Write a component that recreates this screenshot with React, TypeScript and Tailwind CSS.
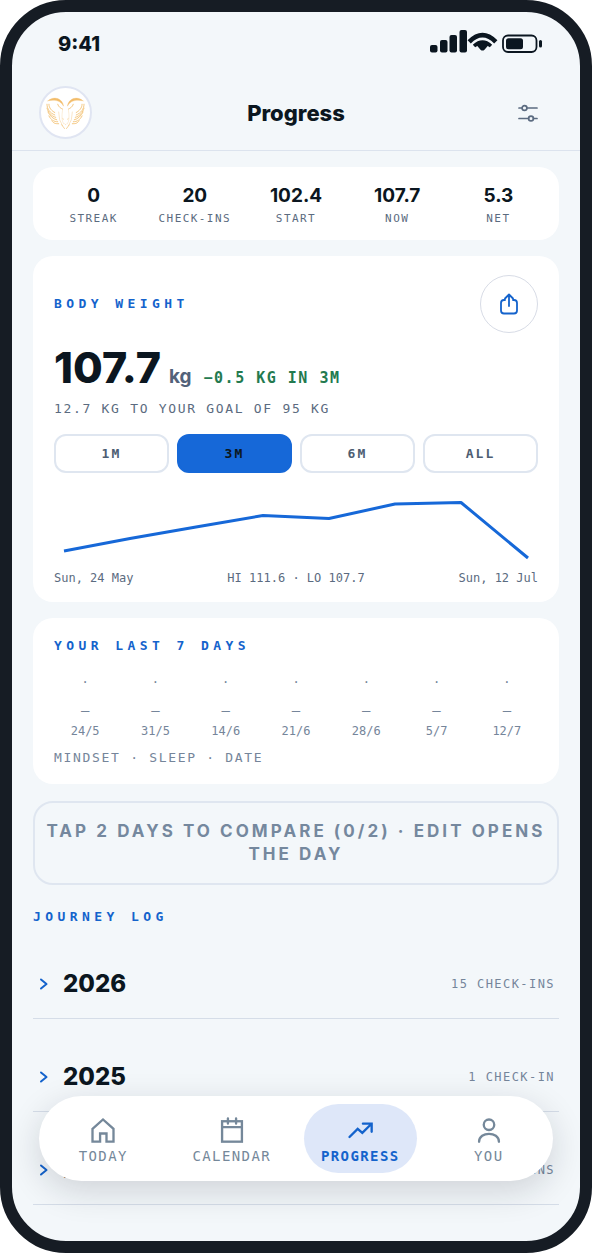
import type { ReactNode } from "react";

const stats = [
  { value: "0", label: "STREAK" },
  { value: "20", label: "CHECK-INS" },
  { value: "102.4", label: "START" },
  { value: "107.7", label: "NOW" },
  { value: "5.3", label: "NET" },
];

const ranges = ["1M", "3M", "6M", "ALL"];
const days = ["24/5", "31/5", "14/6", "21/6", "28/6", "5/7", "12/7"];
const years = [
  { year: "2026", count: "15 CHECK-INS" },
  { year: "2025", count: "1 CHECK-IN" },
  { year: "2024", count: "4 CHECK-INS" },
];

function RamLogo() {
  const wing = (
    <g strokeLinecap="round">
      <path d="M1 8 C1 13 4 17 9 19" />
      <path d="M1 12 C2 16 5 20 10 21.500" />
      <path d="M2 16 C4 20 7 23 11 24" />
      <path d="M3 20 C5 24 8 26 12 26" />
      <path d="M6 25 C8 28 10 28 13 28" />
      <path d="M3 8 C3 12 6 15 9 16.500" />
      <path d="M2 4.500 C8 -1 17 2 18 10 C15 4 9 3 2 4.500Z" fill="#f3bd6a" strokeWidth=".4" />
      <path d="M12 8 C13 11 15 12 17 13" />
      <path d="M13 16 L14 24 L17 30" opacity=".45" />
      <path d="M17 14 C16 20 16 25 18 28" opacity=".3" />
      <path d="M16 29 L19 33" opacity=".8" />
    </g>
  );
  return (
    <svg viewBox="0 0 40 34" className="mt-px h-[34px] w-[39px]" fill="none" stroke="#f4c680" strokeWidth="1" aria-hidden="true">
      {wing}
      <g transform="translate(40 0) scale(-1 1)">{wing}</g>
      <path d="M17 22 L18 24 M23 22 L22 24 M19 28 L20 29 L21 28" opacity=".5" />
    </svg>
  );
}

function StatusIcons() {
  return (
    <div className="flex items-center pb-1 text-[#0b1620]">
      <svg width="37" height="24" viewBox="0 0 37 24" fill="currentColor" aria-hidden="true">
        <rect x="0" y="15" width="7.5" height="7.5" rx="2" />
        <rect x="10" y="10" width="7.5" height="12.5" rx="2" />
        <rect x="19.5" y="5" width="7.5" height="17.5" rx="2" />
        <rect x="29.5" y="0" width="7.5" height="22.5" rx="2" />
      </svg>
      <svg width="31" height="24" viewBox="0 0 31 24" fill="none" stroke="currentColor" aria-hidden="true">
        <path d="M2.2 11.800 Q15.500 -1.500 28.800 11.800" strokeWidth="4.600" />
        <path d="M7 16 Q15.500 8.500 24 16" strokeWidth="3.600" />
        <path d="M9.500 15 Q15.500 10 21.500 15 L17.500 19.700 Q15.500 21.500 13.500 19.700Z" fill="currentColor" stroke="none" />
      </svg>
      <svg width="45" height="24" viewBox="0 0 45 24" fill="none" aria-hidden="true">
        <rect x="5" y="5.500" width="33.500" height="16.500" rx="5" stroke="currentColor" strokeWidth="1.800" />
        <rect x="8" y="8.300" width="17" height="11" rx="2.500" fill="currentColor" />
        <rect x="41" y="10" width="3" height="7.500" rx="1.500" fill="currentColor" />
      </svg>
    </div>
  );
}

function SectionTitle({ children }: { children: ReactNode }) {
  return (
    <h2 className="font-['DejaVu_Sans_Mono',monospace] text-[13px] leading-5 font-bold tracking-[0.34em] text-[#1463cc]">
      {children}
    </h2>
  );
}

const navIcons = {
  today: <path d="M3 11 L12 3 L21 11 V22 H15 V15 H9.500 V22 H3 Z" />,
  calendar: (
    <>
      <rect x="3.500" y="4.500" width="17" height="17.500" />
      <path d="M3.500 9.500 H20.500 M8.500 2 V6.500 M15.500 2 V6.500" />
    </>
  ),
  progress: <path d="M3 18 L10 11 L14 14.500 L21 7.500 M14.500 6.500 H22 V13.500" />,
  you: (
    <>
      <circle cx="12" cy="7.500" r="4.500" />
      <path d="M3.500 22 C3.500 13 20.500 13 20.500 22" />
    </>
  ),
};

const navItems = [
  { label: "TODAY", icon: navIcons.today, active: false },
  { label: "CALENDAR", icon: navIcons.calendar, active: false },
  { label: "PROGRESS", icon: navIcons.progress, active: true },
  { label: "YOU", icon: navIcons.you, active: false },
];

export default function App() {
  return (
    <div className="bg-white font-['Inter',sans-serif] text-[#0b1620]">
      <div className="relative flex min-h-screen flex-col overflow-hidden rounded-[66px] border-12 border-[#161c24] bg-[#f3f7fa]">
        <header className="border-b border-[#dce3ee]">
          <div className="flex h-16 items-center justify-between pr-[37px] pl-[46px]">
            <span className="text-xl font-extrabold">9:41</span>
            <StatusIcons />
          </div>
          <div className="grid grid-cols-3 items-center px-[27px] pt-[10px] pb-[11px]">
            <button aria-label="Profile" className="flex size-[53px] items-center justify-center rounded-full border-2 border-[#e0e5f2] bg-white">
              <RamLogo />
            </button>
            <h1 className="text-center text-[22px] leading-8 font-extrabold">Progress</h1>
            <button aria-label="Filters" className="mr-[15px] justify-self-end text-[#5b6b80]">
              <svg width="20" height="20" viewBox="0 0 20 20" fill="none" stroke="currentColor" strokeWidth="1.700" strokeLinecap="round" aria-hidden="true">
                <path d="M1 5 H4 M9 5 H19 M1 15.500 H10.500 M15.500 15.500 H19" />
                <circle cx="6.500" cy="5" r="2.400" />
                <circle cx="13" cy="15.500" r="2.400" />
              </svg>
            </button>
          </div>
        </header>

        <main className="flex flex-1 flex-col px-[21px] pt-4 pb-9">
          <section className="grid grid-cols-5 rounded-[20px] bg-white px-[10px] pt-[17px] pb-[13px] text-center">
            {stats.map((s) => (
              <div key={s.label}>
                <div className="text-[19px] leading-6 font-bold">{s.value}</div>
                <div className="mt-[3px] font-['DejaVu_Sans_Mono',monospace] text-[11px] leading-4 tracking-[0.13em] text-[#5b6b80]">{s.label}</div>
              </div>
            ))}
          </section>

          <section className="mt-4 rounded-[20px] bg-white px-[21px] pt-[19px] pb-[14px]">
            <div className="flex items-center justify-between">
              <SectionTitle>BODY WEIGHT</SectionTitle>
              <button aria-label="Share" className="flex size-[58px] items-center justify-center rounded-full border border-[#d8dce6] text-[#1463cc]">
                <svg width="22" height="24" viewBox="0 0 22 24" fill="none" stroke="currentColor" strokeWidth="1.800" strokeLinecap="round" strokeLinejoin="round" aria-hidden="true">
                  <path d="M7 8 H6 Q3 8 3 11 V18.500 Q3 21.500 6 21.500 H16 Q19 21.500 19 18.500 V11 Q19 8 16 8 H15 M11 14 V2.500 M7 6.500 L11 2.500 L15 6.500" />
                </svg>
              </button>
            </div>
            <div className="mt-2 flex items-baseline">
              <span className="text-[43px] leading-[52px] font-extrabold">107.7</span>
              <span className="ml-2 text-[19px] leading-6 font-bold text-[#52627a]">kg</span>
              <span className="ml-3 font-['DejaVu_Sans_Mono',monospace] text-[15px] leading-5 font-bold tracking-[0.1em] text-[#237a4f]">−0.5 KG IN 3M</span>
            </div>
            <p className="mt-[6px] font-['DejaVu_Sans_Mono',monospace] text-[13px] leading-5 tracking-[0.13em] text-[#5b6b80]">12.7 KG TO YOUR GOAL OF 95 KG</p>
            <div className="mt-[15px] grid grid-cols-4 gap-2">
              {ranges.map((r) => (
                <button
                  key={r}
                  aria-pressed={r === "3M"}
                  className={`h-[39px] rounded-xl border-2 font-['DejaVu_Sans_Mono',monospace] text-[13px] font-bold tracking-[0.16em] ${
                    r === "3M" ? "border-[#1668d8] bg-[#1668d8] text-[#0b1620]" : "border-[#dfe6f0] bg-white text-[#4d5d72]"
                  }`}
                >
                  {r}
                </button>
              ))}
            </div>
            <svg viewBox="0 0 484 74" className="mt-[21px] block w-full" fill="none" aria-label="Body weight, 3 months" role="img">
              <path d="M10 57 L76 44.500 L142 33 L209 21.500 L275 24.500 L341 10 L407 8.500 L474 64" stroke="#1668d8" strokeWidth="3" strokeLinejoin="round" />
            </svg>
            <div className="flex justify-between font-['DejaVu_Sans_Mono',monospace] text-xs leading-5 text-[#5b6b80]">
              <span>Sun, 24 May</span>
              <span>HI 111.6 · LO 107.7</span>
              <span>Sun, 12 Jul</span>
            </div>
          </section>

          <section className="mt-4 rounded-[20px] bg-white px-[21px] pt-[18px] pb-4">
            <SectionTitle>YOUR LAST 7 DAYS</SectionTitle>
            <div className="mt-[14px] grid grid-cols-7 gap-2 text-center font-['DejaVu_Sans_Mono',monospace] text-xs text-[#75859a]">
              {days.map((d) => (
                <div key={d}>
                  <div className="leading-6">·</div>
                  <div className="pt-1 text-sm leading-6">–</div>
                  <div className="leading-[18px]">{d}</div>
                </div>
              ))}
            </div>
            <p className="mt-2 font-['DejaVu_Sans_Mono',monospace] text-[13px] leading-5 tracking-[0.13em] text-[#75859a]">MINDSET · SLEEP · DATE</p>
          </section>

          <button className="mt-[17px] rounded-[20px] border-2 border-[#dfe6f0] px-2 py-[17px] text-[17px] leading-[23px] font-bold tracking-[0.18em] text-[#75889e]">
            TAP 2 DAYS TO COMPARE (0/2) · EDIT OPENS THE DAY
          </button>

          <div className="mt-[22px]">
            <SectionTitle>JOURNEY LOG</SectionTitle>
          </div>
          <div className="mt-[23px] flex flex-col gap-6">
            {years.map((y) => (
              <button key={y.year} className="flex h-[69px] items-center border-b border-[#d5dde8] px-1 text-left">
                <svg width="14" height="14" viewBox="0 0 14 14" fill="none" stroke="#1463cc" strokeWidth="2" strokeLinecap="round" strokeLinejoin="round" aria-hidden="true">
                  <path d="M4 2.500 L9.500 7 L4 11.500" />
                </svg>
                <span className="ml-3 text-2xl font-extrabold">{y.year}</span>
                <span className="ml-auto font-['DejaVu_Sans_Mono',monospace] text-xs tracking-[0.12em] text-[#75859a]">{y.count}</span>
              </button>
            ))}
          </div>
        </main>

        <nav className="absolute inset-x-[27px] bottom-[60px] grid grid-cols-4 rounded-[43px] bg-white py-2 shadow-[0_10px_34px_rgba(20,25,35,0.16)]">
          {navItems.map((n) => (
            <a
              key={n.label}
              href="#"
              aria-current={n.active ? "page" : undefined}
              className={`mx-2 flex h-[69px] flex-col items-center gap-[3px] rounded-[35px] pt-3 font-['DejaVu_Sans_Mono',monospace] text-sm leading-[18px] tracking-[0.1em] ${
                n.active ? "bg-[#dee7f9] font-bold text-[#1463cc]" : "text-[#75889a]"
              }`}
            >
              <svg width="28" height="28" viewBox="0 0 24 24" fill="none" stroke="currentColor" strokeWidth="2" strokeLinecap="round" aria-hidden="true">
                {n.icon}
              </svg>
              {n.label}
            </a>
          ))}
        </nav>
      </div>
    </div>
  );
}
